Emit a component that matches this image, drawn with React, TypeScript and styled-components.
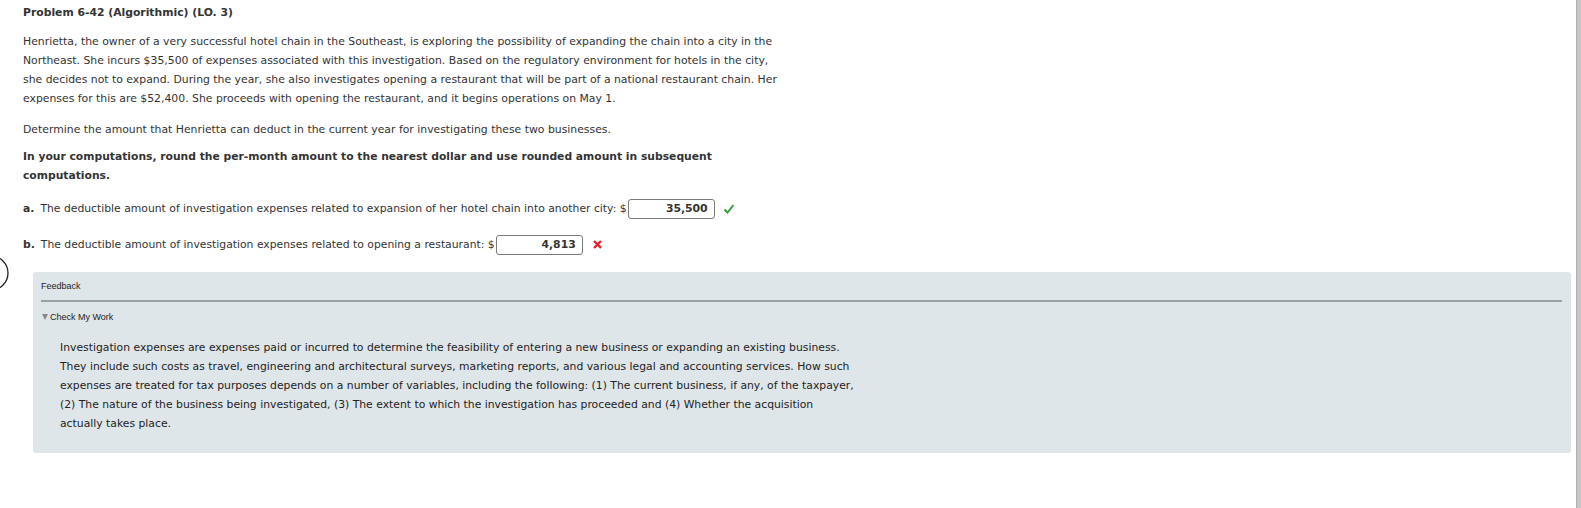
import React from "react";
import styled, { createGlobalStyle } from "styled-components";

const GlobalStyle = createGlobalStyle`
  html, body {
    margin: 0;
    padding: 0;
    background: #fff;
  }
  body {
    font-family: "DejaVu Sans", Verdana, sans-serif;
    font-size: 10.8px;
    color: #333;
    overflow: hidden;
  }
`;

const Page = styled.div`
  position: relative;
  width: 1581px;
  height: 508px;
  box-sizing: border-box;
  padding: 6px 10px 0 23px;
`;

const Title = styled.div`
  font-weight: bold;
  line-height: 14px;
`;

const Para = styled.p<{ $top?: number; $bold?: boolean }>`
  margin: ${(p) => p.$top ?? 0}px 0 0;
  line-height: 19px;
  font-weight: ${(p) => (p.$bold ? "bold" : "normal")};
  font-size: ${(p) => (p.$bold ? "10.75px" : "10.85px")};
  white-space: nowrap;
`;

const PartRow = styled.div<{ $top: number }>`
  display: flex;
  align-items: center;
  margin-top: ${(p) => p.$top}px;
  height: 21px;
  white-space: nowrap;
`;

const PartLabel = styled.b`
  margin-right: 6px;
`;

const AnswerBox = styled.div`
  width: 87px;
  height: 20px;
  box-sizing: border-box;
  border: 1px solid #7a7a7a;
  border-radius: 3px;
  background: #fff;
  font-weight: bold;
  text-align: right;
  line-height: 18px;
  padding-right: 6px;
  margin-left: 1px;
  color: #333;
`;

const Mark = styled.span<{ $ok: boolean }>`
  margin-left: ${(p) => (p.$ok ? 8 : 9)}px;
  display: inline-flex;
  align-items: center;
`;

const FeedbackBox = styled.div`
  margin: 17px 0 0 10px;
  background: #dfe6e9;
  border-radius: 3px;
  padding: 9px 9px 20px 8px;
`;

const SmallLabel = styled.div`
  font-family: "Liberation Sans", Arial, sans-serif;
  font-size: 9px;
  line-height: 10px;
  color: #222;
  display: flex;
  align-items: center;
`;

const Rule = styled.hr`
  border: 0;
  border-top: 2px solid #9aa1a5;
  margin: 9px 0 10px;
`;

const Caret = styled.span`
  display: inline-block;
  width: 0;
  height: 0;
  border-left: 3px solid transparent;
  border-right: 3px solid transparent;
  border-top: 6px solid #888;
  margin: 0 2px 0 1px;
`;

const Explanation = styled.div`
  margin: 16px 0 0 19px;
  line-height: 19px;
  font-size: 10.8px;
  color: #222;
  white-space: nowrap;
`;

const Scrollbar = styled.div`
  position: fixed;
  top: 0;
  right: 0;
  width: 4px;
  height: 100%;
  background: #c8c8c8;
  border-left: 1px solid #b0b0b0;
`;

const EdgeCircle = styled.svg`
  position: absolute;
  left: 0;
  top: 254px;
`;

const Check = () => (
  <svg width="12" height="12" viewBox="0 0 12 12">
    <path
      d="M1.5 6.5 L4.5 9.5 L10.5 2"
      fill="none"
      stroke="#3b9a3b"
      strokeWidth="2"
    />
  </svg>
);

const Cross = () => (
  <svg width="11" height="11" viewBox="0 0 11 11">
    <path
      d="M2 2 L9 9 M9 2 L2 9"
      fill="none"
      stroke="#e8202a"
      strokeWidth="2.4"
    />
  </svg>
);

export default function App() {
  return (
    <>
      <GlobalStyle />
      <Page>
        <EdgeCircle width="12" height="40" viewBox="0 0 12 40">
          <circle cx="-9" cy="19" r="17" fill="none" stroke="#222" strokeWidth="1.3" />
        </EdgeCircle>
        <Title>Problem 6-42 (Algorithmic) (LO. 3)</Title>
        <Para $top={12}>
          Henrietta, the owner of a very successful hotel chain in the Southeast, is exploring the possibility of expanding the chain into a city in the
          <br />
          Northeast. She incurs $35,500 of expenses associated with this investigation. Based on the regulatory environment for hotels in the city,
          <br />
          she decides not to expand. During the year, she also investigates opening a restaurant that will be part of a national restaurant chain. Her
          <br />
          expenses for this are $52,400. She proceeds with opening the restaurant, and it begins operations on May 1.
        </Para>
        <Para $top={12}>
          Determine the amount that Henrietta can deduct in the current year for investigating these two businesses.
        </Para>
        <Para $top={8} $bold>
          In your computations, round the per-month amount to the nearest dollar and use rounded amount in subsequent
          <br />
          computations.
        </Para>
        <PartRow $top={13}>
          <PartLabel>a.</PartLabel>
          The deductible amount of investigation expenses related to expansion of her hotel chain into another city: $
          <AnswerBox>35,500</AnswerBox>
          <Mark $ok>
            <Check />
          </Mark>
        </PartRow>
        <PartRow $top={15}>
          <PartLabel>b.</PartLabel>
          The deductible amount of investigation expenses related to opening a restaurant: $
          <AnswerBox>4,813</AnswerBox>
          <Mark $ok={false}>
            <Cross />
          </Mark>
        </PartRow>
        <FeedbackBox>
          <SmallLabel>Feedback</SmallLabel>
          <Rule />
          <SmallLabel>
            <Caret />
            Check My Work
          </SmallLabel>
          <Explanation>
            Investigation expenses are expenses paid or incurred to determine the feasibility of entering a new business or expanding an existing business.
            <br />
            They include such costs as travel, engineering and architectural surveys, marketing reports, and various legal and accounting services. How such
            <br />
            expenses are treated for tax purposes depends on a number of variables, including the following: (1) The current business, if any, of the taxpayer,
            <br />
            (2) The nature of the business being investigated, (3) The extent to which the investigation has proceeded and (4) Whether the acquisition
            <br />
            actually takes place.
          </Explanation>
        </FeedbackBox>
        <Scrollbar />
      </Page>
    </>
  );
}
